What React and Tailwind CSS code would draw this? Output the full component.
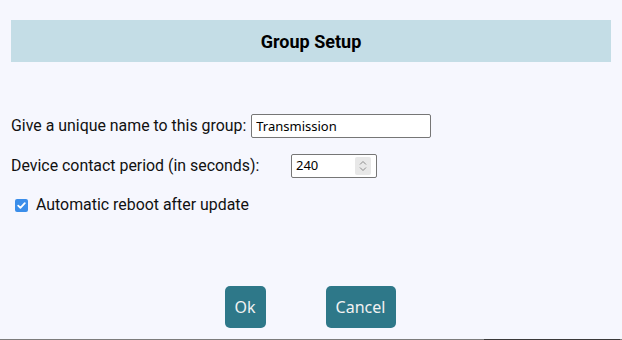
export default function App() {
  return (
    <div className="w-[622px] h-[340px] overflow-hidden bg-[#f6f7fe] flex flex-col" style={{ fontFamily: "Roboto, 'Liberation Sans', sans-serif" }}>
      <div className="h-[339px] flex flex-col px-[11px]">
        <div className="mt-[20px] h-[42px] bg-[#c4dde6] flex items-center justify-center">
          <span className="text-[18px] font-bold text-black">Group Setup</span>
        </div>
        <div className="mt-[52px] flex items-center h-[24px]">
          <span className="text-[15.9px] text-[#111]">Give a unique name to this group:</span>
          <input
            type="text"
            defaultValue="Transmission"
            className="ml-[5px] w-[180px] h-[24px] border border-[#767676] rounded-[2px] bg-white px-[4px] text-[13px] text-black outline-none"
            style={{ fontFamily: "'Noto Sans', sans-serif" }}
          />
        </div>
        <div className="mt-[16px] flex items-center h-[24px]">
          <span className="text-[15.9px] text-[#111] w-[280px]">Device contact period (in seconds):</span>
          <div className="w-[86px] h-[24px] border border-[#767676] rounded-[2px] bg-white flex items-center pl-[4px] pr-[5px]">
            <span className="text-[13px] text-black flex-1" style={{ fontFamily: "'Noto Sans', sans-serif" }}>240</span>
            <div className="w-[16px] h-[18px] bg-[#e8e8e8] rounded-[2px] flex flex-col items-center justify-center gap-[2px]">
              <svg width="8" height="5" viewBox="0 0 8 5"><path d="M1 4.5 L4 1.5 L7 4.5" stroke="#8a8a8a" strokeWidth="1" fill="none" /></svg>
              <svg width="8" height="5" viewBox="0 0 8 5"><path d="M1 0.5 L4 3.5 L7 0.5" stroke="#8a8a8a" strokeWidth="1" fill="none" /></svg>
            </div>
          </div>
        </div>
        <div className="mt-[20px] flex items-center h-[14px] pl-[4px]">
          <div className="w-[13px] h-[13px] rounded-[2px] bg-[#3b8eea] flex items-center justify-center">
            <svg width="11" height="11" viewBox="0 0 11 11"><path d="M2.2 5.6 L4.4 7.8 L8.8 3.2" stroke="white" strokeWidth="1.8" fill="none" strokeLinecap="round" strokeLinejoin="round" /></svg>
          </div>
          <span className="ml-[8px] text-[15.9px] text-[#111]">Automatic reboot after update</span>
        </div>
        <div className="mt-[74px] flex justify-center gap-[60px] pr-[2px]">
          <button className="h-[42px] w-[41px] rounded-[5px] bg-[#2e7889] text-[#f2f2f2] text-[16px]" style={{ fontFamily: "'Noto Sans', sans-serif" }}>Ok</button>
          <button className="h-[42px] w-[70px] rounded-[5px] bg-[#2e7889] text-[#f2f2f2] text-[16px]" style={{ fontFamily: "'Noto Sans', sans-serif" }}>Cancel</button>
        </div>
      </div>
      <div className="h-[1px] bg-[#7c7c7c] relative">
        <div className="absolute left-[484px] top-0 w-[136px] h-[1px] bg-[#3a3a3a]" />
      </div>
    </div>
  );
}
